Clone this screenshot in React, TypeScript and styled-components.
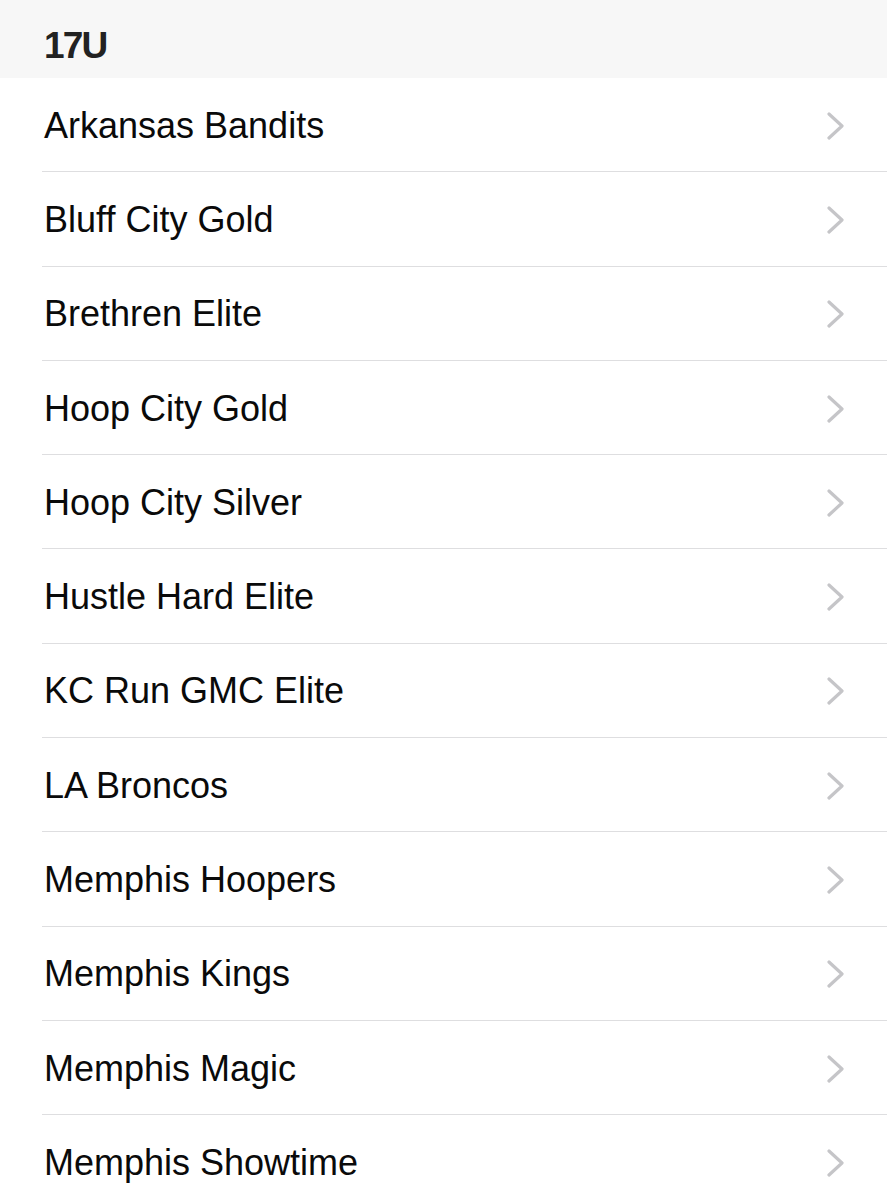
import styled, {createGlobalStyle} from "styled-components";

const GlobalStyle = createGlobalStyle`
	html, body {
		margin: 0;
		padding: 0;
		background: #ffffff;
	}
	body {
		font-family: "Liberation Sans", Arial, sans-serif;
		-webkit-font-smoothing: antialiased;
	}
`;

const Screen = styled.div`
	width: 100%;
	height: 1200px;
	overflow: hidden;
	background: #ffffff;
	display: flex;
	flex-direction: column;
`;

const SectionHeader = styled.div`
	height: 78px;
	flex-shrink: 0;
	background: #f7f7f7;
	display: flex;
	align-items: center;
	padding: 14px 44px 0;
	box-sizing: border-box;
`;

const SectionTitle = styled.h2`
	margin: 0;
	font-size: 37px;
	font-weight: 700;
	letter-spacing: -1.8px;
	color: #222222;
`;

const List = styled.ul`
	list-style: none;
	margin: 0;
	padding: 0 0 0 42px;
`;

const Row = styled.li`
	height: 94.3px;
	box-sizing: border-box;
	display: flex;
	align-items: center;
	justify-content: space-between;
	padding: 2px 43px 0 2px;
	border-bottom: 1.5px solid #dedee0;
`;

const TeamName = styled.span`
	font-size: 36px;
	color: #0a0a0a;
`;

const Chevron = () => (
	<svg width="17" height="28" viewBox="0 0 17 28" fill="none">
		<polyline
			points="2,2 15,14 2,26"
			stroke="#c5c5c8"
			strokeWidth="3.2"
			strokeLinecap="round"
			strokeLinejoin="round"
		/>
	</svg>
);

const teams = [
	"Arkansas Bandits",
	"Bluff City Gold",
	"Brethren Elite",
	"Hoop City Gold",
	"Hoop City Silver",
	"Hustle Hard Elite",
	"KC Run GMC Elite",
	"LA Broncos",
	"Memphis Hoopers",
	"Memphis Kings",
	"Memphis Magic",
	"Memphis Showtime",
];

const App = () => {
	return (
		<>
			<GlobalStyle />
			<Screen>
				<SectionHeader>
					<SectionTitle>17U</SectionTitle>
				</SectionHeader>
				<List>
					{teams.map((team) => (
						<Row key={team}>
							<TeamName>{team}</TeamName>
							<Chevron />
						</Row>
					))}
				</List>
			</Screen>
		</>
	);
};

export default App;
